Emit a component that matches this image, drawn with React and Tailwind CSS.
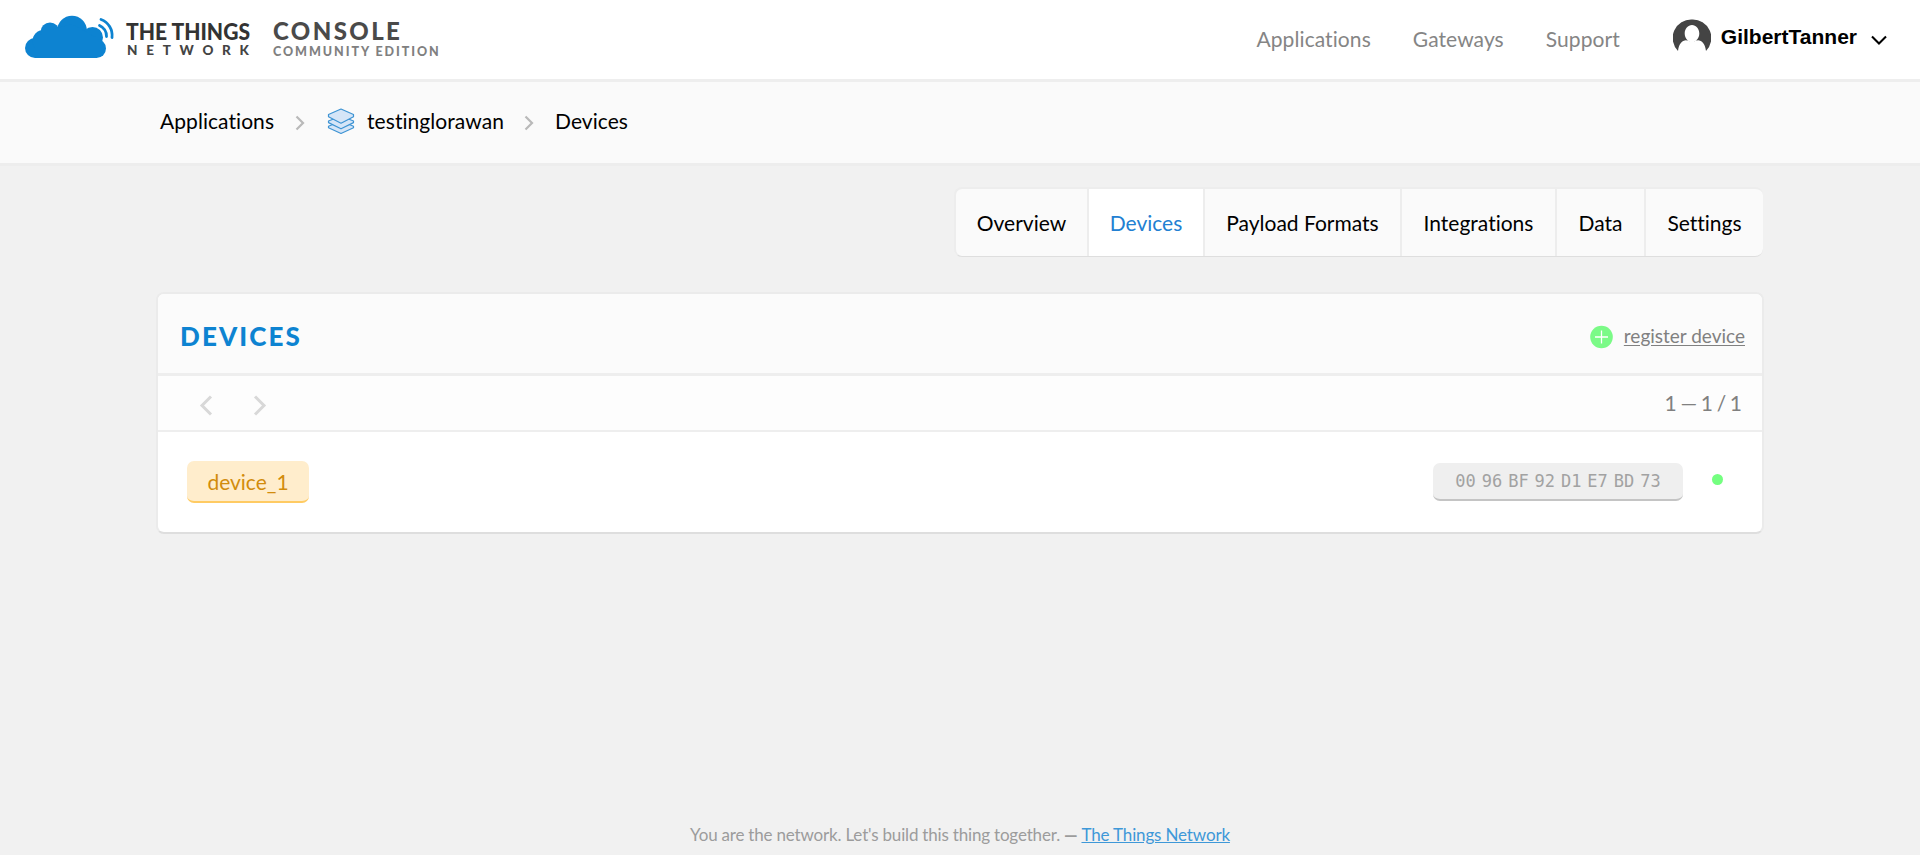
import React from "react";

const tabs = [
  { label: "Overview", box: "w-[133px]" },
  { label: "Devices", box: "w-[116px]", active: true },
  { label: "Payload Formats", box: "w-[197px]" },
  { label: "Integrations", box: "w-[155px]" },
  { label: "Data", box: "w-[89px]" },
  { label: "Settings", box: "w-[117px]" },
];

function Logo() {
  return (
    <svg width="260" height="64" viewBox="0 0 260 64" className="block shrink-0 overflow-visible">
      <g fill="#0d83d1">
        <circle cx="35" cy="48" r="10" />
        <circle cx="43.500" cy="41" r="11" />
        <circle cx="50" cy="32" r="9.500" />
        <circle cx="72" cy="30.500" r="14.800" />
        <circle cx="92.500" cy="37.500" r="10.500" />
        <circle cx="96.500" cy="48.500" r="9.500" />
        <path d="M35 58H97V38L72 24L50 30L35 40Z" />
      </g>
      <g fill="none" stroke="#0d83d1" strokeWidth="2.800" strokeLinecap="round">
        <path d="M101 19.500A17 17 0 0 1 112 37.500" />
        <path d="M99.500 25.500A12 12 0 0 1 106.500 36.500" />
      </g>
      <text x="126" y="40" textLength="124" lengthAdjust="spacingAndGlyphs" fill="#333" fontFamily="Lato, sans-serif" fontWeight="900" fontSize="22.500">THE THINGS</text>
      <text x="127" y="55" textLength="122" fill="#444" fontFamily="Lato, sans-serif" fontWeight="900" fontSize="13.500">NETWORK</text>
    </svg>
  );
}

function Chevron({ className }) {
  return (
    <svg width="10" height="16" viewBox="0 0 10 16" className={className} fill="none" stroke="#b9b9b9" strokeWidth="2.200">
      <path d="M1.500 1.500L8 8L1.500 14.500" />
    </svg>
  );
}

function Layers() {
  return (
    <svg width="28" height="28" viewBox="0 0 28 28" className="ml-[22px] shrink-0" fill="#d5e5f7" stroke="#3d93d3" strokeWidth="1.200" strokeLinejoin="round">
      <path d="M14 14L26.500 19.200V20.800L14 26.500L1.500 20.800V19.200Z" />
      <path d="M14 9L26.500 14V15.600L14 21.800L1.500 15.600V14Z" />
      <path d="M14 2L26.500 7.500V9.700L14 16.200L1.500 9.700V7.500Z" />
    </svg>
  );
}

export default function App() {
  return (
    <div className="flex h-[855px] w-full flex-col overflow-hidden bg-[#f1f1f1] font-['Lato',sans-serif] text-black [font-variant-ligatures:none]">
      <header className="flex h-[82px] shrink-0 border-b-[3px] border-[#eee] bg-white">
        <Logo />
        <div className="ml-[13px] flex flex-col pt-[18px] font-black">
          <span className="text-[24px] leading-[26px] tracking-[2.4px] text-[#4a4a4a]">CONSOLE</span>
          <span className="text-[12.5px] leading-4 tracking-[1.95px] text-[#808080]">COMMUNITY EDITION</span>
        </div>
        <nav className="ml-auto flex gap-[42px] pt-[25px] text-[21px] leading-7 tracking-[0.08px] text-[#858585]">
          <span>Applications</span>
          <span>Gateways</span>
          <span>Support</span>
        </nav>
        <div className="mr-[33px] ml-[53px] flex">
          <svg width="38" height="38" viewBox="0 0 38 38" className="mt-[18px]">
            <path fill="#444" fillRule="evenodd" d="M19 1.500A18.500 18.500 0 0 0 5 33C6 25 9 22.500 14.500 22C16.500 24.500 21.500 24.500 23.500 22C29 22.500 32 25 33 33A18.500 18.500 0 0 0 19 1.500ZM19 7C23 7 26.300 11 26.300 15.500S23 24 19 24S11.700 20 11.700 15.500S15 7 19 7Z" />
          </svg>
          <span className="ml-[10px] pt-6 font-['Liberation_Sans',sans-serif] text-[21px] leading-[26px] font-bold">GilbertTanner</span>
          <svg width="16" height="11" viewBox="0 0 16 11" className="mt-[35px] ml-[14px]" fill="none" stroke="#000" strokeWidth="2.100">
            <path d="M1 1.500L8 8.500L15 1.500" />
          </svg>
        </div>
      </header>

      <div className="flex h-[84px] shrink-0 border-b-[3px] border-[#ededed] bg-[#fafafa] pt-[23px] pl-[160px] text-[21px] leading-8">
        <div className="flex h-8 items-center tracking-[0.06px]">
          <span>Applications</span>
          <Chevron className="mt-1 ml-[21px]" />
          <Layers />
          <span className="ml-[12px]">testinglorawan</span>
          <Chevron className="mt-1 ml-[20px]" />
          <span className="ml-[21px]">Devices</span>
        </div>
      </div>

      <main className="mx-auto w-[1608px] grow pt-[21px]">
        <div className="flex justify-end pr-px">
          <div className="flex h-[70px] overflow-hidden rounded-lg border-t-2 border-b border-l-2 border-t-[#ededed] border-b-[#dedede] border-l-[#ededed] bg-[#fafafa]">
            {tabs.map((t) => (
              <div
                key={t.label}
                className={`${t.box} flex justify-center border-r-2 border-[#ededed] pt-[18px] text-[21px] leading-8 last:border-r-0 ${t.active ? "bg-white text-[#2280d2]" : ""}`}
              >
                {t.label}
              </div>
            ))}
          </div>
        </div>

        <section className="mt-[35px] overflow-hidden rounded-lg border-2 border-[#ebebeb] border-b-[#dedede] bg-white">
          <div className="flex h-[82px] justify-between border-b-[3px] border-[#eee] bg-[#fbfbfb] pr-[17px] pl-[22px]">
            <h1 className="pt-[26px] text-[26px] leading-8 font-black tracking-[2.1px] text-[#0d83d1]">DEVICES</h1>
            <div className="mt-[27px] flex h-8 items-center text-[19px] text-[#808080]">
              <svg width="24" height="24" viewBox="0 0 24 24" className="mr-[10px]">
                <circle cx="11.500" cy="12" r="11.300" fill="#7bfa87" />
                <path d="M11.500 5.500V18.500M5 12H18" stroke="#fff" strokeWidth="1.300" />
              </svg>
              <span className="mb-0.5 underline underline-offset-2">register device</span>
            </div>
          </div>
          <div className="flex h-[56px] items-start justify-between border-b-2 border-[#eee] bg-[#fdfdfd] pr-5 pl-[41px]">
            <div className="mt-[19px] flex gap-[40px]">
              <svg width="14" height="21" viewBox="0 0 14 21" fill="none" stroke="#d8d8d8" strokeWidth="3">
                <path d="M12 1.500L3 10.500L12 19.500" />
              </svg>
              <svg width="14" height="21" viewBox="0 0 14 21" fill="none" stroke="#d8d8d8" strokeWidth="3">
                <path d="M2 1.500L11 10.500L2 19.500" />
              </svg>
            </div>
            <span className="pt-[11px] text-[21px] leading-8 text-[#808080] [word-spacing:-1.7px]">1 — 1 / 1</span>
          </div>
          <div className="flex h-[100px] justify-between pr-[39px] pl-[29px]">
            <div className="mt-[29px] flex h-[42px] w-[122px] justify-center rounded-[7px] border-b-2 border-[#ffcb63] bg-[#ffedcc] pt-[5px] text-[21px] leading-8 text-[#d28c0c]">device_1</div>
            <div className="mt-[31px] flex">
              <div className="flex h-[38px] w-[250px] justify-center rounded-[7px] border-b-2 border-[#c4c4c4] bg-[#efefef] pt-[6px] font-['DejaVu_Sans_Mono',monospace] text-[17px] leading-6 whitespace-pre text-[#a2a2a2] [word-spacing:-4.3px]">
                00 96 BF 92 D1 E7 BD 73
              </div>
              <span className="mt-[11px] ml-[29px] size-[11px] rounded-full bg-[#74ff80]" />
            </div>
          </div>
        </section>
      </main>

      <footer className="flex h-[32px] shrink-0 justify-center text-[17px] leading-6 tracking-[-0.15px] text-[#9c9c9c]">
        <span className="whitespace-pre [word-spacing:-0.2px]">You are the network. Let's build this thing together. <b className="font-black">—</b> </span>
        <span className="text-[#3e98d8] underline">The Things Network</span>
      </footer>
    </div>
  );
}
